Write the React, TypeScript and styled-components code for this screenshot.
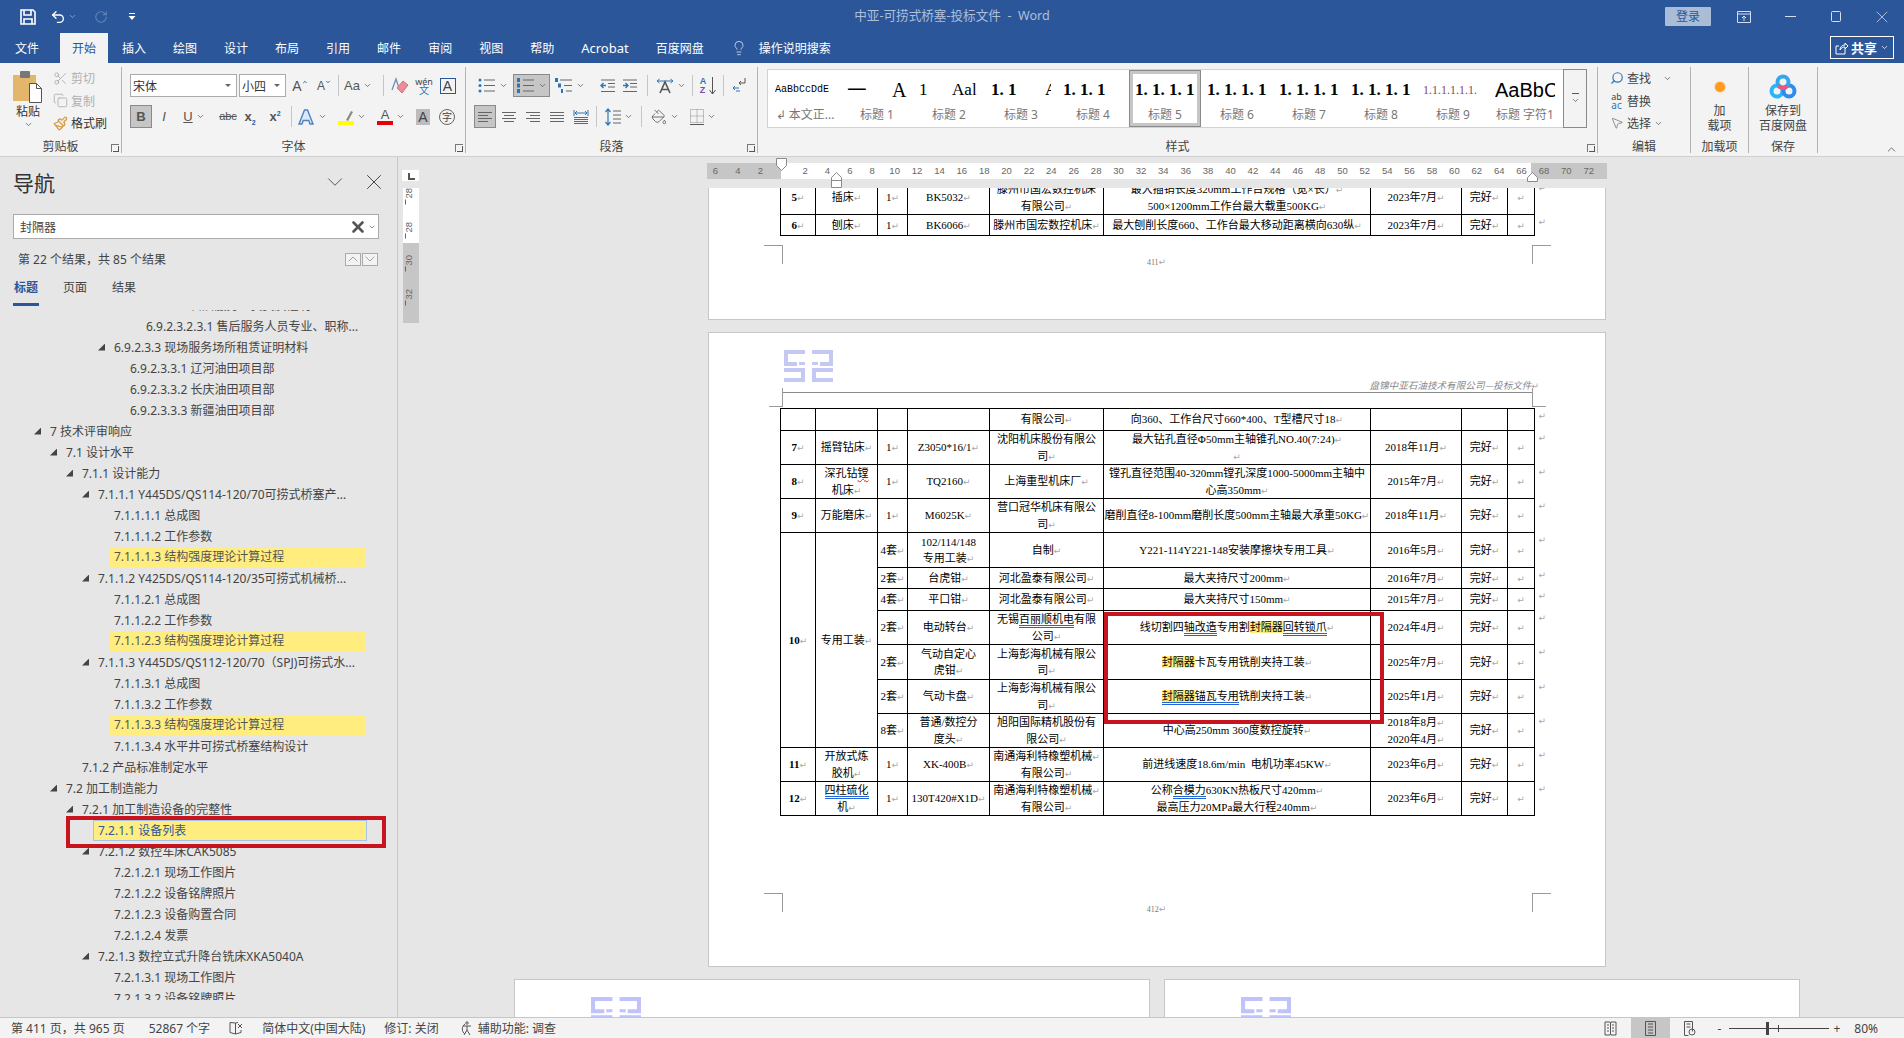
import React from 'react';
import styled, { createGlobalStyle } from 'styled-components';
import {
  ChevronDown,
  ChevronUp,
  Copy,
  Lightbulb,
  MousePointer2,
  PaintBucket,
  Paintbrush,
  RotateCw,
  Scissors,
  Search,
  Undo2,
  X,
} from 'lucide-react';

const UI_FONT = `"Noto Sans", "Noto Sans CJK SC", sans-serif`;
const DOC_FONT = `"Liberation Serif", "Noto Sans CJK SC", serif`;

const GlobalStyle = createGlobalStyle`
  html, body { margin: 0; padding: 0; height: 100%; overflow: hidden; }
  body { font-family: ${UI_FONT}; font-size: 12px; color: #444; background: #e6e6e6; }
  * { box-sizing: border-box; }
`;

const Shell = styled.div`
  width: 1904px;
  height: 1038px;
  display: flex;
  flex-direction: column;
  overflow: hidden;
`;

/* ---------- title bar ---------- */

const TitleBar = styled.div`
  height: 33px;
  flex: none;
  background: #2b579a;
  display: grid;
  grid-template-columns: 1fr auto 1fr;
  align-items: center;
  color: #fff;
`;

const Quick = styled.div`
  display: flex;
  align-items: center;
  padding-left: 18px;
`;

const QuickSlot = styled.div<{ $w: number }>`
  width: ${(p) => p.$w}px;
  display: flex;
  align-items: center;
  justify-content: center;
  gap: 2px;
`;

const DocTitle = styled.div`
  color: #aebfd9;
  font-size: 12.6px;
  line-height: 30px;
  margin-bottom: 1px;
  white-space: pre;
`;

const WindowControls = styled.div`
  display: flex;
  align-items: center;
  justify-content: flex-end;
  margin-right: -1px;
`;

const LoginButton = styled.div`
  width: 46px;
  height: 19px;
  background: #aabcd6;
  border-radius: 1px;
  color: #2b579a;
  text-align: center;
  line-height: 19px;
  margin-right: 10px;
`;

const WindowButton = styled.div`
  width: 46px;
  height: 30px;
  display: flex;
  align-items: center;
  justify-content: center;
`;

/* ---------- tab row ---------- */

const TabRow = styled.div`
  height: 30px;
  flex: none;
  background: #2b579a;
  display: flex;
  align-items: stretch;
  padding-left: 3px;
  gap: 3px;
  color: #fff;
`;

const RibbonTab = styled.div<{ $active?: boolean; $mr?: number; $size?: number }>`
  padding: 0 12px;
  display: flex;
  align-items: center;
  background: ${(p) => (p.$active ? '#f3f3f3' : 'transparent')};
  color: ${(p) => (p.$active ? '#2b579a' : '#fff')};
  margin-right: ${(p) => p.$mr ?? 0}px;
  font-size: ${(p) => p.$size ?? 12}px;
`;

const TellMe = styled.div`
  display: flex;
  align-items: center;
  gap: 12px;
  margin-left: 12px;
`;

const ShareButton = styled.div`
  margin: 3px 10px 4px auto;
  width: 64px;
  border: 1px solid #fff;
  display: flex;
  align-items: center;
  justify-content: center;
  gap: 3px;
  font-weight: 700;
  font-size: 13px;
`;

/* ---------- ribbon ---------- */

const Ribbon = styled.div`
  height: 94px;
  flex: none;
  background: #f3f3f3;
  border-bottom: 1px solid #d0d0d0;
  display: flex;
  align-items: flex-start;
  position: relative;
`;

const Group = styled.div<{ $w: number; $plain?: boolean }>`
  width: ${(p) => p.$w}px;
  height: 86px;
  margin-top: 4px;
  flex: none;
  display: flex;
  flex-direction: column;
  position: relative;
  border-right: ${(p) => (p.$plain ? 'none' : '1px solid #b4b4b4')};
`;

const GroupBody = styled.div`
  flex: 1;
  min-height: 0;
  display: flex;
`;

const GroupLabel = styled.div`
  height: 13px;
  line-height: 13px;
  flex: none;
  text-align: center;
  color: #444;
`;

const Launcher = styled.div`
  position: absolute;
  right: 2px;
  bottom: 1px;
  width: 8px;
  height: 8px;
  border-left: 1px solid #777;
  border-top: 1px solid #777;
  &::after {
    content: '';
    position: absolute;
    right: 0;
    bottom: 0;
    width: 5px;
    height: 5px;
    border-right: 1px solid #555;
    border-bottom: 1px solid #555;
  }
`;

const PasteColumn = styled.div`
  width: 50px;
  margin-left: 3px;
  display: flex;
  flex-direction: column;
  align-items: center;
  padding-top: 4px;
  color: #333;
`;

const PasteLabel = styled.div`
  margin-top: 1px;
  line-height: 16px;
`;

const SmallColumn = styled.div`
  display: flex;
  flex-direction: column;
  margin-left: 0;
`;

const SmallRow = styled.div<{ $off?: boolean }>`
  height: 22.5px;
  display: flex;
  align-items: center;
  gap: 3px;
  color: ${(p) => (p.$off ? '#b0b0b0' : '#333')};
`;

const IconSlot = styled.div<{ $w?: number }>`
  width: ${(p) => p.$w ?? 15}px;
  display: flex;
  align-items: center;
  justify-content: center;
`;

const ToolStack = styled.div<{ $pl: number }>`
  display: flex;
  flex-direction: column;
  gap: 8px;
  padding: 7px 0 0 ${(p) => p.$pl}px;
`;

const ToolRow = styled.div`
  height: 23px;
  display: flex;
  align-items: center;
`;

const SelectBox = styled.div<{ $w: number; $ml?: number }>`
  width: ${(p) => p.$w}px;
  height: 23px;
  margin-left: ${(p) => p.$ml ?? 0}px;
  background: #fff;
  border: 1px solid #ababab;
  display: flex;
  align-items: center;
  padding: 0 5px 0 2px;
  justify-content: space-between;
  color: #333;
`;

const Caret = styled.span`
  width: 0;
  height: 0;
  border-left: 3px solid transparent;
  border-right: 3px solid transparent;
  border-top: 3px solid #666;
`;

const Tool = styled.div<{ $w: number; $ml?: number; $on?: boolean }>`
  width: ${(p) => p.$w}px;
  height: 23px;
  flex: none;
  margin-left: ${(p) => p.$ml ?? 0}px;
  display: flex;
  align-items: center;
  justify-content: center;
  gap: 3px;
  color: #555;
  background: ${(p) => (p.$on ? '#c6c6c6' : 'transparent')};
  border: ${(p) => (p.$on ? '1px solid #8a8a8a' : 'none')};
`;

const ToolSep = styled.div<{ $ml?: number; $mr?: number }>`
  width: 1px;
  height: 21px;
  flex: none;
  background: #c6c6c6;
  margin-left: ${(p) => p.$ml ?? 0}px;
  margin-right: ${(p) => p.$mr ?? 0}px;
`;

const Glyph = styled.span<{ $size?: number; $bold?: boolean; $italic?: boolean; $color?: string; $line?: string }>`
  font-family: "Liberation Sans", sans-serif;
  font-size: ${(p) => p.$size ?? 13}px;
  line-height: 1;
  font-weight: ${(p) => (p.$bold ? 700 : 400)};
  font-style: ${(p) => (p.$italic ? 'italic' : 'normal')};
  color: ${(p) => p.$color ?? '#555'};
  text-decoration: ${(p) => p.$line ?? 'none'};
  white-space: pre;
`;

const GrowCaret = styled(ChevronUp)`
  margin: -8px 0 0 -3px;
`;

const ShrinkCaret = styled(ChevronDown)`
  margin: -8px 0 0 -3px;
`;

const SubGlyph = styled.sub`
  font-size: 7px;
  color: #2b579a;
  line-height: 0;
`;

const SupGlyph = styled.sup`
  font-size: 7px;
  color: #2b579a;
  line-height: 0;
`;

const ColorLetter = styled.span<{ $bar: string }>`
  font-family: "Liberation Sans", sans-serif;
  font-size: 13px;
  line-height: 12px;
  height: 16px;
  width: 16px;
  text-align: center;
  color: #555;
  border-bottom: 4px solid ${(p) => p.$bar};
`;

const BoxedLetter = styled.span`
  width: 16px;
  height: 16px;
  border: 1px solid #2b579a;
  font-family: "Liberation Sans", sans-serif;
  font-size: 14px;
  line-height: 14px;
  text-align: center;
  color: #444;
`;

const ShadedLetter = styled.span`
  width: 14px;
  height: 16px;
  background: #bcbcbc;
  font-family: "Liberation Sans", sans-serif;
  font-size: 14px;
  line-height: 16px;
  text-align: center;
  color: #444;
`;

const CircledChar = styled.span`
  width: 16px;
  height: 16px;
  border: 1px solid #666;
  border-radius: 50%;
  font-size: 10px;
  line-height: 14px;
  text-align: center;
  color: #444;
`;

const WenStack = styled.span`
  display: flex;
  flex-direction: column;
  align-items: center;
  line-height: 9px;
  font-size: 9px;
  color: #444;
`;

const WenChar = styled.span`
  color: #2e75b6;
  font-size: 10px;
`;

const GalleryWrap = styled.div`
  display: flex;
  margin: 2px 0 0 9px;
  height: 59px;
`;

const Gallery = styled.div`
  width: 796px;
  background: #fff;
  border: 1px solid #d2d2d2;
  border-right: none;
  display: flex;
  padding-left: 1px;
`;

const StyleItem = styled.div<{ $on?: boolean }>`
  width: 72px;
  flex: none;
  display: flex;
  flex-direction: column;
  align-items: center;
  overflow: hidden;
  ${(p) => (p.$on ? 'box-shadow: inset 0 0 0 1px #8a8a8a, inset 0 0 0 4px #c6c6c6;' : '')}
`;

const StylePreview = styled.div<{ $font?: string; $size?: number; $bold?: boolean; $color?: string }>`
  width: 60px;
  height: 34px;
  line-height: 40px;
  overflow: hidden;
  white-space: pre;
  text-align: left;
  font-family: ${(p) => p.$font ?? '"Liberation Serif", serif'};
  font-size: ${(p) => p.$size ?? 17}px;
  font-weight: ${(p) => (p.$bold ? 700 : 400)};
  color: ${(p) => p.$color ?? '#000'};
`;

const StyleName = styled.div`
  color: #777;
  white-space: pre;
  line-height: 22px;
`;

const GalleryMore = styled.div`
  width: 24px;
  border: 1px solid #8a8a8a;
  background: #f3f3f3;
  display: flex;
  flex-direction: column;
  align-items: center;
  justify-content: center;
  gap: 2px;
`;

const MoreBar = styled.span`
  width: 7px;
  height: 1px;
  background: #555;
`;

const EditColumn = styled.div`
  display: flex;
  flex-direction: column;
  padding: 0 0 0 11px;
`;

const EditRow = styled.div`
  height: 22.5px;
  display: flex;
  align-items: center;
  gap: 3px;
  color: #444;
`;

const FindIcon = styled(Search)`
  transform: scaleX(-1);
`;

const ChevSlot = styled.span<{ $ml: number }>`
  display: flex;
  margin-left: ${(p) => p.$ml}px;
`;

const BigTool = styled.div`
  flex: 1;
  display: flex;
  flex-direction: column;
  align-items: center;
  padding-top: 4px;
  color: #444;
  line-height: 15px;
  text-align: center;
`;

const BigIcon = styled.div`
  height: 31px;
  display: flex;
  align-items: center;
  margin-bottom: 1px;
`;

const OrangeDot = styled.span`
  width: 10px;
  height: 10px;
  border-radius: 50%;
  background: #ff9a1f;
  box-shadow: 0 0 2px #ffb45c;
`;

const RibbonCollapse = styled.div`
  position: absolute;
  right: 6px;
  bottom: 0;
  display: flex;
`;

/* ---------- workspace ---------- */

const Workspace = styled.div`
  flex: 1;
  min-height: 0;
  display: flex;
`;

const NavPane = styled.div`
  width: 398px;
  flex: none;
  background: #e6e6e6;
  border-right: 1px solid #c6c6c6;
  display: flex;
  flex-direction: column;
`;

const NavHeader = styled.div`
  height: 57px;
  flex: none;
  display: flex;
  align-items: center;
  padding: 0 10px 7px 13px;
`;

const NavTitle = styled.div`
  font-size: 21px;
  color: #333;
  margin-right: auto;
`;

const NavIcon = styled.div<{ $mr?: number }>`
  display: flex;
  margin-right: ${(p) => p.$mr ?? 0}px;
`;

const SearchBox = styled.div`
  height: 25px;
  width: 366px;
  flex: none;
  margin-left: 13px;
  background: #fff;
  border: 1px solid #ababab;
  display: flex;
  align-items: center;
  padding: 0 2px 0 6px;
  color: #444;
`;

const SearchText = styled.span`
  margin-right: auto;
`;

const SearchMenu = styled(ChevronDown)`
  margin-left: 1px;
`;

const ResultRow = styled.div`
  height: 30px;
  margin-top: 5px;
  flex: none;
  display: flex;
  align-items: center;
  padding: 0 19px 0 18px;
`;

const ResultText = styled.span`
  margin-right: auto;
  color: #444;
`;

const PageStep = styled.span`
  width: 16px;
  height: 13px;
  margin-left: 1px;
  border: 1px solid #ababab;
  background: #f3f3f3;
  display: flex;
  align-items: center;
  justify-content: center;
  overflow: hidden;
  svg {
    flex: none;
  }
`;

const NavTabs = styled.div`
  height: 32px;
  flex: none;
  display: flex;
  gap: 23px;
  padding-left: 13px;
`;

const NavTab = styled.div<{ $active?: boolean }>`
  width: 26px;
  text-align: center;
  line-height: 28px;
  color: ${(p) => (p.$active ? '#2b579a' : '#444')};
  font-weight: ${(p) => (p.$active ? 700 : 400)};
  border-bottom: 3px solid ${(p) => (p.$active ? '#2b579a' : 'transparent')};
`;

const Tree = styled.div`
  height: 690px;
  margin-top: 4px;
  flex: none;
  overflow: hidden;
  position: relative;
`;

const TreeInner = styled.div`
  margin-top: -15.5px;
`;

const TreeRow = styled.div<{ $level: number }>`
  height: 21px;
  display: flex;
  align-items: center;
  padding-left: ${(p) => 50 + p.$level * 16}px;
  white-space: pre;
  color: #444;
`;

const TreeArrow = styled.span`
  width: 7px;
  height: 7px;
  margin-left: -16px;
  margin-right: 9px;
  background: #444;
  clip-path: polygon(100% 0, 100% 100%, 0 100%);
`;

const TreeLabel = styled.span<{ $mode?: 'hit' | 'current' }>`
  ${(p) =>
    p.$mode === 'hit'
      ? 'background: #ffed80; width: 257px; height: 20px; line-height: 20px; margin-left: -5px; padding-left: 5px; color: #555;'
      : ''}
  ${(p) =>
    p.$mode === 'current'
      ? 'background: #ffed80; width: 274px; height: 21px; line-height: 19px; margin-left: -5px; padding-left: 4px; color: #2b579a; border: 1px solid #a6c4e8;'
      : ''}
`;

const Callout = styled.div<{ $left: number; $top: number; $w: number; $h: number }>`
  position: absolute;
  left: ${(p) => p.$left}px;
  top: ${(p) => p.$top}px;
  width: ${(p) => p.$w}px;
  height: ${(p) => p.$h}px;
  border: 4px solid #c8141e;
  pointer-events: none;
`;

const EditorPane = styled.div`
  flex: 1;
  min-width: 0;
  display: flex;
  flex-direction: column;
`;

const RulerRow = styled.div`
  height: 31px;
  flex: none;
  display: flex;
  padding-top: 6px;
`;

const RulerCorner = styled.div`
  width: 17px;
  height: 11px;
  margin: 7px 0 0 4px;
  background: #fff;
  position: relative;
  &::after {
    content: '';
    position: absolute;
    left: 6px;
    top: 3px;
    width: 5px;
    height: 5px;
    border-left: 2px solid #555;
    border-bottom: 2px solid #555;
  }
`;

const HRuler = styled.div`
  margin-left: 288px;
  width: 900px;
  height: 16px;
  position: relative;
  display: flex;
  background: linear-gradient(to right, #c6c6c6 74px, #fff 74px, #fff 824px, #c6c6c6 824px);
`;

const RulerScale = styled.div`
  display: flex;
  margin-left: -2.7px;
`;

const RulerNum = styled.span`
  width: 22.4px;
  flex: none;
  text-align: center;
  font-size: 9.5px;
  line-height: 16px;
  color: #666;
  font-family: "Liberation Sans", sans-serif;
`;

const RulerMarker = styled.svg<{ $left: number; $top: number }>`
  position: absolute;
  left: ${(p) => p.$left}px;
  top: ${(p) => p.$top}px;
`;

const EditorBody = styled.div`
  flex: 1;
  min-height: 0;
  display: flex;
`;

const VRuler = styled.div`
  width: 16px;
  margin-left: 5px;
  flex: none;
  display: flex;
  flex-direction: column;
`;

const VBand = styled.div<{ $h: number; $gray?: boolean }>`
  height: ${(p) => p.$h}px;
  flex: none;
  overflow: hidden;
  background: ${(p) => (p.$gray ? '#c6c6c6' : '#fff')};
`;

const VNum = styled.div<{ $shift?: number }>`
  height: 33.5px;
  margin-top: ${(p) => p.$shift ?? 0}px;
  display: flex;
  align-items: center;
  justify-content: center;
  writing-mode: vertical-rl;
  transform: rotate(180deg);
  font-size: 9.5px;
  color: #666;
  font-family: "Liberation Sans", sans-serif;
  position: relative;
  &::after {
    content: '';
    position: absolute;
    left: 7.5px;
    top: 5px;
    width: 1px;
    height: 5px;
    background: #666;
  }
`;

const Canvas = styled.div`
  flex: 1;
  min-width: 0;
  overflow: hidden;
  display: flex;
  flex-direction: column;
  align-items: center;
  padding-right: 9px;
  gap: 12px;
`;

const Page = styled.div<{ $h: number }>`
  width: 898px;
  height: ${(p) => p.$h}px;
  flex: none;
  background: #fff;
  border: 1px solid #c6c6c6;
  position: relative;
  display: flex;
  flex-direction: column;
  overflow: hidden;
`;

const TopPage = styled(Page)`
  border-top: none;
`;

const PageHeader = styled.div`
  height: 42px;
  margin: 17px 66px 0 75px;
  display: flex;
  justify-content: space-between;
  flex: none;
`;

const HeaderText = styled.div`
  font-family: "Noto Sans CJK SC", sans-serif;
  font-size: 9.6px;
  line-height: 13px;
  font-style: italic;
  color: #888;
  white-space: pre;
  align-self: flex-end;
`;

const HeaderRule = styled.div`
  height: 16px;
  margin: 0 72px 0 73px;
  border-top: 1px solid #8a8a8a;
  flex: none;
`;

const Table = styled.table<{ $shift?: number }>`
  margin: ${(p) => p.$shift ?? 0}px 0 0 71px;
  width: 754px;
  flex: none;
  table-layout: fixed;
  border-collapse: collapse;
  font-family: ${DOC_FONT};
  font-size: 11px;
  color: #000;
`;

const Tr = styled.tr<{ $h: number }>`
  height: ${(p) => p.$h}px;
`;

const Td = styled.td<{ $bold?: boolean }>`
  border: 1px solid #000;
  padding: 0;
  text-align: center;
  vertical-align: middle;
  white-space: pre;
  line-height: 16.5px;
  font-weight: ${(p) => (p.$bold ? 700 : 400)};
  overflow: visible;
  position: relative;
`;

const Mark = styled.span`
  font-family: "DejaVu Sans", sans-serif;
  font-size: 9px;
  line-height: 1;
  font-weight: 400;
  color: #a8a8a8;
`;

const EndMark = styled(Mark)`
  position: absolute;
  right: -12px;
  top: 0;
  line-height: 14px;
`;

const Hit = styled.span`
  background: #ffed80;
`;

const Grammar = styled.span`
  border-bottom: 3px double #2464d6;
`;

const Spell = styled.span`
  text-decoration: underline wavy #e0201c 1px;
`;

const PageNumber = styled.div<{ $mt: number }>`
  margin-top: ${(p) => p.$mt}px;
  text-align: center;
  font-family: ${DOC_FONT};
  font-size: 8px;
  line-height: 10px;
  color: #777;
  flex: none;
  padding-right: 1px;
`;

const CropMark = styled.div<{ $side: 'left' | 'right'; $top: number }>`
  position: absolute;
  top: ${(p) => p.$top}px;
  ${(p) => (p.$side === 'left' ? 'left: 55px; border-right: 1px solid #9a9a9a;' : 'left: 823px; border-left: 1px solid #9a9a9a;')}
  width: 19px;
  height: 19px;
  border-top: 1px solid #9a9a9a;
`;

const HeaderCorner = styled.div<{ $side: 'left' | 'right' }>`
  position: absolute;
  top: 55px;
  height: 19px;
  width: 14px;
  border-bottom: 1px solid #9a9a9a;
  ${(p) => (p.$side === 'left' ? 'left: 60px; border-right: 1px solid #9a9a9a;' : 'left: 823px; border-left: 1px solid #9a9a9a;')}
`;

const PageRow = styled.div`
  display: flex;
  gap: 14px;
  flex: none;
`;

const SmallPage = styled.div`
  width: 636px;
  height: 120px;
  background: #fff;
  border: 1px solid #c6c6c6;
  padding: 17px 0 0 76px;
`;

/* ---------- status bar ---------- */

const StatusBar = styled.div`
  height: 21px;
  flex: none;
  background: #f3f3f3;
  border-top: 1px solid #c6c6c6;
  display: flex;
  align-items: center;
  color: #444;
  position: relative;
  z-index: 1;
`;

const StatusItem = styled.div<{ $left: number }>`
  margin-left: ${(p) => p.$left}px;
  display: flex;
  align-items: center;
  gap: 6px;
  white-space: pre;
`;

const StatusRight = styled.div`
  margin-left: auto;
  padding-right: 26px;
  display: flex;
  align-items: center;
`;

const ViewButton = styled.div<{ $on?: boolean; $ml?: number }>`
  width: 39px;
  height: 20px;
  margin-left: ${(p) => p.$ml ?? 0}px;
  background: ${(p) => (p.$on ? '#c6c6c6' : 'transparent')};
  display: flex;
  align-items: center;
  justify-content: center;
`;

const ZoomTrack = styled.div`
  width: 100px;
  height: 1px;
  flex: none;
  margin: 0 4px 0 8px;
  background: #444;
  position: relative;
`;

const ZoomThumb = styled.span`
  position: absolute;
  left: 37px;
  top: -6px;
  width: 3px;
  height: 13px;
  background: #444;
`;

const ZoomCenter = styled.span`
  position: absolute;
  left: 49px;
  top: -3px;
  width: 1px;
  height: 7px;
  background: #444;
`;

/* ---------- drawn icons ---------- */

const SaveIcon = () => (
  <svg width="16" height="16" viewBox="0 0 16 16" fill="none" stroke="#fff" strokeWidth="1.6">
    <path d="M1 1h12l2 2v12H1z" />
    <path d="M4 1v5h7V1M4 15v-5h8v5" />
  </svg>
);

const QuickMenuIcon = () => (
  <svg width="8" height="8" viewBox="0 0 8 8" fill="#fff">
    <rect x="1" y="0" width="6" height="1" />
    <path d="M0.5 3h7L4 7z" />
  </svg>
);

const RibbonDisplayIcon = () => (
  <svg width="14" height="12" viewBox="0 0 14 12" fill="none" stroke="#d5deec">
    <path d="M.5.5h13v11H.5zM.5 3h13M7 10V5M5 7l2-2 2 2" />
  </svg>
);

const ShareIcon = () => (
  <svg width="13" height="14" viewBox="0 0 13 14" fill="none" stroke="#fff">
    <path d="M1 5v8h9V8M1 5h3M5 9c0-3 2-5 5-5V2l3 3-3 3V6c-2 0-4 1-5 3z" />
  </svg>
);

const TinyChevron = ({ color = '#555' }: { color?: string }) => (
  <ChevronDown size={9} strokeWidth={2} color={color} />
);

const PasteIcon = () => (
  <svg width="30" height="32" viewBox="0 0 30 32" fill="none">
    <rect x="0" y="4" width="23" height="26" fill="#e3b66b" />
    <rect x="7" y="0" width="10" height="7" rx="1" fill="#777" />
    <path d="M16.5 12.5h7l5 5v14h-12z" fill="#fff" stroke="#555" />
    <path d="M23.5 12.5v5h5" stroke="#555" />
  </svg>
);

type AlignMode = 'left' | 'center' | 'right' | 'full';

const AlignIcon = ({ mode }: { mode: AlignMode }) => {
  const long = 14;
  const short = mode === 'full' ? 14 : 10;
  const x = mode === 'left' || mode === 'full' ? 1 : mode === 'center' ? 3 : 5;
  return (
    <svg width="16" height="12" viewBox="0 0 16 12" stroke="#666">
      <path d={`M1 1.5h${long}`} />
      <path d={`M${x} 4.5h${short}`} />
      <path d={`M1 7.5h${long}`} />
      <path d={`M${x} 10.5h${short}`} />
    </svg>
  );
};

const DistributeIcon = () => (
  <svg width="16" height="16" viewBox="0 0 16 16" fill="none">
    <path d="M1 1v6M15 1v6M2 4h12M4 2L2 4l2 2M12 2l2 2-2 2" stroke="#2e75b6" />
    <path d="M1 8.5h14M1 10.5h14M1 12.5h14M1 14.5h14" stroke="#666" />
  </svg>
);

const BulletsIcon = () => (
  <svg width="18" height="15" viewBox="0 0 18 15">
    <g fill="#2e75b6">
      <circle cx="2" cy="2" r="1.5" />
      <circle cx="2" cy="7.5" r="1.5" />
      <circle cx="2" cy="13" r="1.5" />
    </g>
    <path d="M6 2h11M6 7.5h11M6 13h11" stroke="#666" />
  </svg>
);

const NumberingIcon = () => (
  <svg width="18" height="15" viewBox="0 0 18 15">
    <g fill="#2e75b6">
      <rect x="0" y="0" width="3" height="4" />
      <rect x="0" y="5.5" width="3" height="4" />
      <rect x="0" y="11" width="3" height="4" />
    </g>
    <path d="M6 2h11M6 7.5h11M6 13h11" stroke="#666" />
  </svg>
);

const MultiLevelIcon = () => (
  <svg width="18" height="15" viewBox="0 0 18 15">
    <g fill="#2e75b6">
      <rect x="0" y="0" width="3" height="4" />
      <rect x="3" y="5.5" width="3" height="4" />
      <rect x="6" y="11" width="2" height="4" />
    </g>
    <path d="M5 2h12M9 7.5h8M11 13h6" stroke="#666" />
  </svg>
);

const IndentIcon = ({ out }: { out?: boolean }) => (
  <svg width="16" height="14" viewBox="0 0 16 14" fill="none">
    <path d="M1 1h14M8 4.5h7M8 8h7M1 12.5h14" stroke="#666" />
    <path d={out ? 'M6 6.5H1M3.5 4L1 6.5 3.5 9' : 'M1 6.5h5M3.5 4L6 6.5 3.5 9'} stroke="#2e75b6" strokeWidth="1.4" />
  </svg>
);

const AsianLayoutIcon = () => (
  <svg width="18" height="16" viewBox="0 0 18 16" fill="none">
    <path d="M1 3h16M1 3l2.5-2M1 3l2.5 2M17 3l-2.5-2M17 3l-2.5 2" stroke="#2e75b6" />
    <path d="M4 15L9 4l5 11M5.5 11.5h7" stroke="#555" strokeWidth="1.6" />
  </svg>
);

const SortLetters = styled.span`
  display: flex;
  flex-direction: column;
  font-family: "Liberation Sans", sans-serif;
  font-size: 9px;
  line-height: 9px;
  font-weight: 700;
  color: #2e75b6;
`;

const SortZ = styled.span`
  color: #7b4fa6;
`;

const DownArrowIcon = () => (
  <svg width="7" height="18" viewBox="0 0 7 18" fill="none" stroke="#555">
    <path d="M3.5 0v17M.5 13l3 4 3-4" />
  </svg>
);

const ParagraphMarkIcon = () => (
  <svg width="14" height="16" viewBox="0 0 14 16" fill="none" stroke="#555">
    <path d="M13 0v5H7M9 3L7 5l2 2" />
    <path d="M7 10H1M3 8l-2 2 2 2M8 13H4" stroke="#2e75b6" />
  </svg>
);

const LineSpacingIcon = () => (
  <svg width="16" height="18" viewBox="0 0 16 18" fill="none">
    <path d="M3 1v16M.5 4L3 1l2.5 3M.5 14L3 17l2.5-3" stroke="#2e75b6" strokeWidth="1.2" />
    <path d="M8 3h8M8 7h8M8 11h8M8 15h8" stroke="#666" />
  </svg>
);

const BorderIcon = () => (
  <svg width="14" height="16" viewBox="0 0 14 16" fill="none" stroke="#8a8a8a" strokeDasharray="1 1">
    <path d="M.5.5h13v13H.5zM7 .5v13M.5 7h13" />
    <path d="M0 15.5h14" stroke="#555" strokeDasharray="none" />
  </svg>
);

const EraserIcon = () => (
  <svg width="18" height="18" viewBox="0 0 18 18" fill="none">
    <path d="M1 13L5 2l3 9" stroke="#6f8fb5" strokeWidth="1.3" />
    <path d="M6 11l6-7 5 4-6 8z" fill="#ec8c98" stroke="#d66e7c" />
  </svg>
);

const TextEffectIcon = () => (
  <svg width="18" height="18" viewBox="0 0 18 18" fill="#dbe8f6" stroke="#4f83bd" strokeWidth="1.4">
    <path d="M2 16L7.5 2h3L16 16h-3l-1.2-3.5H6.2L5 16z" />
  </svg>
);

const HighlighterIcon = () => (
  <svg width="16" height="16" viewBox="0 0 16 16" fill="none">
    <path d="M8 11l5-9 2 1-5 9z" fill="#8a8a8a" />
    <rect x="0" y="12" width="16" height="4" fill="#ffff00" />
  </svg>
);

const BookCheckIcon = () => (
  <svg width="14" height="13" viewBox="0 0 14 13" fill="none" stroke="#555">
    <path d="M6.5 1L1 .5v10l5.5 1.5zM6.5 1L9 .5M6.5 12L12 10.5V8" />
    <path d="M9 2l4 4M13 2L9 6" />
  </svg>
);

const AccessibilityIcon = () => (
  <svg width="14" height="16" viewBox="0 0 14 16" fill="none" stroke="#555">
    <path d="M7 4a6 6 0 0 0 0 10" />
    <circle cx="9" cy="3" r="1.2" />
    <path d="M5 6h8M9 6v4M9 10l-3 5M9 10l3 5" />
  </svg>
);

const ViewIcon = ({ kind }: { kind: 'read' | 'print' | 'web' }) => (
  <svg width="13" height="15" viewBox="0 0 13 15" fill="none" stroke="#555">
    {kind === 'read' && <path d="M1 1h5l.5 1 .5-1h5v13H7l-.5-1-.5 1H1zM6.5 2v11M3 4h2M3 7h2M3 10h2M8 4h2M8 7h2M8 10h2" />}
    {kind === 'print' && <path d="M1.5 .5h10v14h-10zM4 3h5M4 6h5M4 9h5M4 12h5" />}
    {kind === 'web' && (
      <>
        <path d="M1.5 .5h8v10M1.5 .5v14h4M3.5 3h4M3.5 6h4" />
        <circle cx="9" cy="11" r="3" />
      </>
    )}
  </svg>
);

const BaiduCloudIcon = () => (
  <svg width="28" height="26" viewBox="0 0 28 26" fill="none">
    <circle cx="8" cy="17" r="5.5" stroke="#29b6f6" strokeWidth="4" />
    <circle cx="20" cy="17" r="5.5" stroke="#2d8cf0" strokeWidth="4" />
    <circle cx="14" cy="8" r="5.5" stroke="#35a7f0" strokeWidth="4" />
    <path d="M9.5 12a6 6 0 0 0 9 0" stroke="#f0567a" strokeWidth="4" />
  </svg>
);

const FretLogo = ({ width, color }: { width: number; color: string }) => (
  <svg width={width} height={(width * 32) / 49} viewBox="0 0 49 32" fill={color}>
    <path d="M0 0h21v4H4v8h9v4H0z" />
    <path d="M15 12h6v3h-6z" />
    <path d="M0 18h21v14H0v-4h17v-6H0z" />
    <path d="M49 0H28v4h17v8h-9v4h13z" />
    <path d="M28 12h6v3h-6z" />
    <path d="M49 18H28v14h21v-4H32v-6h17z" />
  </svg>
);

/* ---------- data ---------- */

type TreeItem = {
  level: number;
  text: string;
  open?: boolean;
  mode?: 'hit' | 'current';
};

const TREE: TreeItem[] = [
  { level: 5, text: '6.9.2.3.2.3 售后服务人员资质证明', open: true },
  { level: 6, text: '6.9.2.3.2.3.1 售后服务人员专业、职称...' },
  { level: 4, text: '6.9.2.3.3 现场服务场所租赁证明材料', open: true },
  { level: 5, text: '6.9.2.3.3.1 辽河油田项目部' },
  { level: 5, text: '6.9.2.3.3.2 长庆油田项目部' },
  { level: 5, text: '6.9.2.3.3.3 新疆油田项目部' },
  { level: 0, text: '7 技术评审响应', open: true },
  { level: 1, text: '7.1 设计水平', open: true },
  { level: 2, text: '7.1.1 设计能力', open: true },
  { level: 3, text: '7.1.1.1 Y445DS/QS114-120/70可捞式桥塞产...', open: true },
  { level: 4, text: '7.1.1.1.1 总成图' },
  { level: 4, text: '7.1.1.1.2 工作参数' },
  { level: 4, text: '7.1.1.1.3 结构强度理论计算过程', mode: 'hit' },
  { level: 3, text: '7.1.1.2 Y425DS/QS114-120/35可捞式机械桥...', open: true },
  { level: 4, text: '7.1.1.2.1 总成图' },
  { level: 4, text: '7.1.1.2.2 工作参数' },
  { level: 4, text: '7.1.1.2.3 结构强度理论计算过程', mode: 'hit' },
  { level: 3, text: '7.1.1.3 Y445DS/QS112-120/70（SPJ)可捞式水...', open: true },
  { level: 4, text: '7.1.1.3.1 总成图' },
  { level: 4, text: '7.1.1.3.2 工作参数' },
  { level: 4, text: '7.1.1.3.3 结构强度理论计算过程', mode: 'hit' },
  { level: 4, text: '7.1.1.3.4 水平井可捞式桥塞结构设计' },
  { level: 2, text: '7.1.2 产品标准制定水平' },
  { level: 1, text: '7.2 加工制造能力', open: true },
  { level: 2, text: '7.2.1 加工制造设备的完整性', open: true },
  { level: 3, text: '7.2.1.1 设备列表', mode: 'current' },
  { level: 3, text: '7.2.1.2 数控车床CAK5085', open: true },
  { level: 4, text: '7.2.1.2.1 现场工作图片' },
  { level: 4, text: '7.2.1.2.2 设备铭牌照片' },
  { level: 4, text: '7.2.1.2.3 设备购置合同' },
  { level: 4, text: '7.2.1.2.4 发票' },
  { level: 3, text: '7.2.1.3 数控立式升降台铣床XKA5040A', open: true },
  { level: 4, text: '7.2.1.3.1 现场工作图片' },
  { level: 4, text: '7.2.1.3.2 设备铭牌照片' },
];

const TABS = ['插入', '绘图', '设计', '布局', '引用', '邮件', '审阅', '视图', '帮助', 'Acrobat', '百度网盘'];

const P = () => <Mark>↵</Mark>;

type Cell = React.ReactNode;
type TableRow = { h: number; cells: Cell[]; span?: number };

const COLS = [35, 62, 30, 82, 114, 267, 91, 46, 27];

const t = (s: string): Cell => (
  <>
    {s}
    <P />
  </>
);

const mfg = (s: string, extra: string) => (
  <>
    {s}
    <P />
    {'\n'}
    {extra}
    <P />
  </>
);

const PAGE_ONE: TableRow[] = [
  {
    h: 34,
    cells: [
      t('5'),
      t('插床'),
      t('1'),
      t('BK5032'),
      t('滕州市国宏数控机床\n有限公司'),
      mfg('最大插销长度320mm工作台规格（宽×长）', '500×1200mm工作台最大载重500KG'),
      t('2023年7月'),
      t('完好'),
      <P />,
    ],
  },
  {
    h: 21,
    cells: [
      t('6'),
      t('刨床'),
      t('1'),
      t('BK6066'),
      t('滕州市国宏数控机床'),
      t('最大刨削长度660、工作台最大移动距离横向630纵'),
      t('2023年7月'),
      t('完好'),
      <P />,
    ],
  },
];

const PAGE_TWO: TableRow[] = [
  { h: 22, cells: ['', '', '', '', t('有限公司'), t('向360、工作台尺寸660*400、T型槽尺寸18'), '', '', ''] },
  {
    h: 34,
    cells: [
      t('7'),
      t('摇臂钻床'),
      t('1'),
      t('Z3050*16/1'),
      t('沈阳机床股份有限公\n司'),
      mfg('最大钻孔直径Φ50mm主轴锥孔NO.40(7:24)', ''),
      t('2018年11月'),
      t('完好'),
      <P />,
    ],
  },
  {
    h: 34,
    cells: [
      t('8'),
      <>
        深孔钻<Spell>镗</Spell>
        {'\n'}机床
        <P />
      </>,
      t('1'),
      t('TQ2160'),
      t('上海重型机床厂'),
      t('镗孔直径范围40-320mm镗孔深度1000-5000mm主轴中\n心高350mm'),
      t('2015年7月'),
      t('完好'),
      <P />,
    ],
  },
  {
    h: 34,
    cells: [
      t('9'),
      t('万能磨床'),
      t('1'),
      t('M6025K'),
      t('营口冠华机床有限公\n司'),
      t('磨削直径8-100mm磨削长度500mm主轴最大承重50KG'),
      t('2018年11月'),
      t('完好'),
      <P />,
    ],
  },
  {
    h: 35,
    span: 7,
    cells: [
      t('10'),
      t('专用工装'),
      t('4套'),
      t('102/114/148\n专用工装'),
      t('自制'),
      t('Y221-114Y221-148安装摩擦块专用工具'),
      t('2016年5月'),
      t('完好'),
      <P />,
    ],
  },
  { h: 21, cells: [t('2套'), t('台虎钳'), t('河北盈泰有限公司'), t('最大夹持尺寸200mm'), t('2016年7月'), t('完好'), <P />] },
  { h: 22, cells: [t('4套'), t('平口钳'), t('河北盈泰有限公司'), t('最大夹持尺寸150mm'), t('2015年7月'), t('完好'), <P />] },
  {
    h: 34,
    cells: [
      t('2套'),
      t('电动转台'),
      <>
        无锡<Grammar>百丽顺机电</Grammar>有限
        {'\n'}公司
        <P />
      </>,
      <>
        线切割四<Grammar>轴改造</Grammar>专用割<Hit>封隔器</Hit>
        <Grammar>回转锁爪</Grammar>
        <P />
      </>,
      t('2024年4月'),
      t('完好'),
      <P />,
    ],
  },
  {
    h: 35,
    cells: [
      t('2套'),
      t('气动自定心\n虎钳'),
      t('上海彭海机械有限公\n司'),
      <>
        <Hit>封隔器</Hit>卡瓦专用铣削夹持工装
        <P />
      </>,
      t('2025年7月'),
      t('完好'),
      <P />,
    ],
  },
  {
    h: 34,
    cells: [
      t('2套'),
      t('气动卡盘'),
      t('上海彭海机械有限公\n司'),
      <>
        <Grammar>
          <Hit>封隔器</Hit>锚瓦专用
        </Grammar>
        铣削夹持工装
        <P />
      </>,
      t('2025年1月'),
      t('完好'),
      <P />,
    ],
  },
  {
    h: 34,
    cells: [
      t('8套'),
      t('普通/数控分\n度头'),
      t('旭阳国际精机股份有\n限公司'),
      t('中心高250mm 360度数控旋转'),
      mfg('2018年8月', '2020年4月'),
      t('完好'),
      <P />,
    ],
  },
  {
    h: 34,
    cells: [
      t('11'),
      t('开放式炼\n胶机'),
      t('1'),
      t('XK-400B'),
      mfg('南通海利特橡塑机械', '有限公司'),
      t('前进线速度18.6m/min  电机功率45KW'),
      t('2023年6月'),
      t('完好'),
      <P />,
    ],
  },
  {
    h: 34,
    cells: [
      t('12'),
      <>
        <Grammar>四柱硫化</Grammar>
        {'\n'}机
        <P />
      </>,
      t('1'),
      t('130T420#X1D'),
      mfg('南通海利特橡塑机械', '有限公司'),
      <>
        公称<Grammar>合模力</Grammar>630KN热板尺寸420mm
        <P />
        {'\n'}最高压力20MPa最大行程240mm
        <P />
      </>,
      t('2023年6月'),
      t('完好'),
      <P />,
    ],
  },
];

const DocTable = ({ rows, shift }: { rows: TableRow[]; shift?: number }) => (
  <Table $shift={shift}>
    <colgroup>
      {COLS.map((w, i) => (
        <col key={i} width={w} />
      ))}
    </colgroup>
    <tbody>
      {rows.map((row, r) => {
        const full = row.cells.length === COLS.length;
        return (
          <Tr key={r} $h={row.h}>
            {row.cells.map((cell, c) => {
              const leading = full && c < 2;
              const last = c === row.cells.length - 1;
              return (
                <Td key={c} $bold={full && c === 0} rowSpan={leading ? row.span : undefined}>
                  {cell}
                  {last && <EndMark>↵</EndMark>}
                </Td>
              );
            })}
          </Tr>
        );
      })}
    </tbody>
  </Table>
);

const RULER = [6, 4, 2, 0, ...Array.from({ length: 36 }, (_, i) => (i + 1) * 2)];

const App = (): JSX.Element => (
  <Shell>
    <GlobalStyle />
    <TitleBar>
      <Quick>
        <QuickSlot $w={20}>
          <SaveIcon />
        </QuickSlot>
        <QuickSlot $w={50}>
          <Undo2 size={16} color="#fff" strokeWidth={2} />
          <TinyChevron color="#9fb4d4" />
        </QuickSlot>
        <QuickSlot $w={26}>
          <RotateCw size={14} color="#5f83b8" strokeWidth={2} />
        </QuickSlot>
        <QuickSlot $w={36}>
          <QuickMenuIcon />
        </QuickSlot>
      </Quick>
      <DocTitle>中亚-可捞式桥塞-投标文件  -  Word</DocTitle>
      <WindowControls>
        <LoginButton>登录</LoginButton>
        <WindowButton>
          <RibbonDisplayIcon />
        </WindowButton>
        <WindowButton>
          <svg width="11" height="1">
            <rect width="11" height="1" fill="#d5deec" />
          </svg>
        </WindowButton>
        <WindowButton>
          <svg width="10" height="11" fill="none" stroke="#d5deec">
            <rect x=".5" y=".5" width="9" height="10" rx="1" />
          </svg>
        </WindowButton>
        <WindowButton>
          <X size={20} color="#d5deec" strokeWidth={0.9} />
        </WindowButton>
      </WindowControls>
    </TitleBar>

    <TabRow>
      <RibbonTab $mr={6}>文件</RibbonTab>
      <RibbonTab $active $mr={-1}>
        开始
      </RibbonTab>
      {TABS.map((tab) => (
        <RibbonTab key={tab} $size={tab === 'Acrobat' ? 13 : 12}>
          {tab}
        </RibbonTab>
      ))}
      <TellMe>
        <Lightbulb size={16} color="#fff" strokeWidth={1} />
        操作说明搜索
      </TellMe>
      <ShareButton>
        <ShareIcon />
        共享
        <TinyChevron color="#fff" />
      </ShareButton>
    </TabRow>

    <Ribbon>
      <Group $w={122}>
        <GroupBody>
          <PasteColumn>
            <PasteIcon />
            <PasteLabel>粘贴</PasteLabel>
            <TinyChevron />
          </PasteColumn>
          <SmallColumn>
            <SmallRow $off>
              <IconSlot>
                <Scissors size={15} color="#a8a8a8" strokeWidth={1.3} />
              </IconSlot>
              剪切
            </SmallRow>
            <SmallRow $off>
              <IconSlot>
                <Copy size={15} color="#a8a8a8" strokeWidth={1.3} />
              </IconSlot>
              复制
            </SmallRow>
            <SmallRow>
              <IconSlot>
                <Paintbrush size={15} color="#d79a3c" strokeWidth={2} />
              </IconSlot>
              格式刷
            </SmallRow>
          </SmallColumn>
        </GroupBody>
        <GroupLabel>剪贴板</GroupLabel>
        <Launcher />
      </Group>

      <Group $w={344}>
        <GroupBody>
          <ToolStack $pl={8}>
            <ToolRow>
              <SelectBox $w={107}>
                宋体
                <Caret />
              </SelectBox>
              <SelectBox $w={47} $ml={2}>
                小四
                <Caret />
              </SelectBox>
              <Tool $w={24} $ml={2}>
                <Glyph $size={14}>A</Glyph>
                <GrowCaret size={6} color="#2e75b6" strokeWidth={4} />
              </Tool>
              <Tool $w={24}>
                <Glyph $size={12}>A</Glyph>
                <ShrinkCaret size={6} color="#2e75b6" strokeWidth={4} />
              </Tool>
              <ToolSep $ml={2} $mr={1} />
              <Tool $w={36}>
                <Glyph $size={13}>Aa</Glyph>
                <TinyChevron />
              </Tool>
              <ToolSep $ml={7} $mr={4} />
              <Tool $w={24}>
                <EraserIcon />
              </Tool>
              <Tool $w={24}>
                <WenStack>
                  wén
                  <WenChar>文</WenChar>
                </WenStack>
              </Tool>
              <Tool $w={23}>
                <BoxedLetter>A</BoxedLetter>
              </Tool>
            </ToolRow>
            <ToolRow>
              <Tool $w={22} $on>
                <Glyph $bold>B</Glyph>
              </Tool>
              <Tool $w={24}>
                <Glyph $italic>I</Glyph>
              </Tool>
              <Tool $w={36}>
                <Glyph $line="underline">U</Glyph>
                <TinyChevron />
              </Tool>
              <Tool $w={30} $ml={1}>
                <Glyph $size={11} $line="line-through">
                  abc
                </Glyph>
              </Tool>
              <Tool $w={14}>
                <Glyph $bold>
                  x<SubGlyph>2</SubGlyph>
                </Glyph>
              </Tool>
              <Tool $w={30} $ml={3}>
                <Glyph $bold>
                  x<SupGlyph>2</SupGlyph>
                </Glyph>
              </Tool>
              <ToolSep $ml={1} $mr={4} />
              <Tool $w={32}>
                <TextEffectIcon />
                <TinyChevron />
              </Tool>
              <Tool $w={34} $ml={7}>
                <HighlighterIcon />
                <TinyChevron />
              </Tool>
              <Tool $w={34} $ml={5}>
                <ColorLetter $bar="#e8000b">A</ColorLetter>
                <TinyChevron />
              </Tool>
              <Tool $w={22} $ml={4}>
                <ShadedLetter>A</ShadedLetter>
              </Tool>
              <Tool $w={22} $ml={2}>
                <CircledChar>字</CircledChar>
              </Tool>
            </ToolRow>
          </ToolStack>
        </GroupBody>
        <GroupLabel>字体</GroupLabel>
        <Launcher />
      </Group>

      <Group $w={292}>
        <GroupBody>
          <ToolStack $pl={8}>
            <ToolRow>
              <Tool $w={34} $ml={2}>
                <BulletsIcon />
                <TinyChevron />
              </Tool>
              <Tool $w={37} $ml={3} $on>
                <NumberingIcon />
                <TinyChevron />
              </Tool>
              <Tool $w={30} $ml={5}>
                <MultiLevelIcon />
                <TinyChevron />
              </Tool>
              <Tool $w={22} $ml={12}>
                <IndentIcon out />
              </Tool>
              <Tool $w={22}>
                <IndentIcon />
              </Tool>
              <ToolSep $ml={6} $mr={7} />
              <Tool $w={32}>
                <AsianLayoutIcon />
                <TinyChevron />
              </Tool>
              <ToolSep $ml={5} $mr={4} />
              <Tool $w={22}>
                <SortLetters>
                  A<SortZ>Z</SortZ>
                </SortLetters>
                <DownArrowIcon />
              </Tool>
              <ToolSep $ml={4} $mr={4} />
              <Tool $w={22}>
                <ParagraphMarkIcon />
              </Tool>
            </ToolRow>
            <ToolRow>
              <Tool $w={22} $on>
                <AlignIcon mode="left" />
              </Tool>
              <Tool $w={22} $ml={2}>
                <AlignIcon mode="center" />
              </Tool>
              <Tool $w={22} $ml={2}>
                <AlignIcon mode="right" />
              </Tool>
              <Tool $w={22} $ml={2}>
                <AlignIcon mode="full" />
              </Tool>
              <Tool $w={22} $ml={2}>
                <DistributeIcon />
              </Tool>
              <ToolSep $ml={4} $mr={6} />
              <Tool $w={32}>
                <LineSpacingIcon />
                <TinyChevron />
              </Tool>
              <ToolSep $ml={6} $mr={6} />
              <Tool $w={34}>
                <PaintBucket size={16} color="#666" strokeWidth={1.4} />
                <TinyChevron />
              </Tool>
              <Tool $w={34} $ml={4}>
                <BorderIcon />
                <TinyChevron />
              </Tool>
            </ToolRow>
          </ToolStack>
        </GroupBody>
        <GroupLabel>段落</GroupLabel>
        <Launcher />
      </Group>

      <Group $w={840}>
        <GroupBody>
          <GalleryWrap>
            <Gallery>
              <StyleItem>
                <StylePreview $font={'"Liberation Mono", monospace'} $size={10}>
                  AaBbCcDdE
                </StylePreview>
                <StyleName>↲ 本文正...</StyleName>
              </StyleItem>
              <StyleItem>
                <StylePreview $size={20}>{'一     A'}</StylePreview>
                <StyleName>标题 1</StyleName>
              </StyleItem>
              <StyleItem>
                <StylePreview>{'1      Aal'}</StylePreview>
                <StyleName>标题 2</StyleName>
              </StyleItem>
              <StyleItem>
                <StylePreview $bold>{'1. 1       A'}</StylePreview>
                <StyleName>标题 3</StyleName>
              </StyleItem>
              <StyleItem>
                <StylePreview $bold>{'1. 1. 1'}</StylePreview>
                <StyleName>标题 4</StyleName>
              </StyleItem>
              <StyleItem $on>
                <StylePreview $bold>{'1. 1. 1. 1'}</StylePreview>
                <StyleName>标题 5</StyleName>
              </StyleItem>
              <StyleItem>
                <StylePreview $bold>{'1. 1. 1. 1'}</StylePreview>
                <StyleName>标题 6</StyleName>
              </StyleItem>
              <StyleItem>
                <StylePreview $bold>{'1. 1. 1. 1'}</StylePreview>
                <StyleName>标题 7</StyleName>
              </StyleItem>
              <StyleItem>
                <StylePreview $bold>{'1. 1. 1. 1'}</StylePreview>
                <StyleName>标题 8</StyleName>
              </StyleItem>
              <StyleItem>
                <StylePreview $size={12} $color="#8a4a63">
                  1.1.1.1.1.1.
                </StylePreview>
                <StyleName>标题 9</StyleName>
              </StyleItem>
              <StyleItem>
                <StylePreview $font={'"Liberation Sans", sans-serif'} $size={20}>
                  AaBbC
                </StylePreview>
                <StyleName>标题 字符1</StyleName>
              </StyleItem>
            </Gallery>
            <GalleryMore>
              <MoreBar />
              <TinyChevron />
            </GalleryMore>
          </GalleryWrap>
        </GroupBody>
        <GroupLabel>样式</GroupLabel>
        <Launcher />
      </Group>

      <Group $w={93}>
        <GroupBody>
          <EditColumn>
            <EditRow>
              <IconSlot>
                <FindIcon size={14} color="#2e75b6" strokeWidth={2} />
              </IconSlot>
              查找
              <ChevSlot $ml={9}>
                <TinyChevron />
              </ChevSlot>
            </EditRow>
            <EditRow>
              <IconSlot>
                <WenStack>
                  <span>ab</span>
                  <WenChar>ac</WenChar>
                </WenStack>
              </IconSlot>
              替换
            </EditRow>
            <EditRow>
              <IconSlot>
                <MousePointer2 size={14} color="#666" strokeWidth={1.2} />
              </IconSlot>
              选择
              <TinyChevron />
            </EditRow>
          </EditColumn>
        </GroupBody>
        <GroupLabel>编辑</GroupLabel>
      </Group>

      <Group $w={58}>
        <GroupBody>
          <BigTool>
            <BigIcon>
              <OrangeDot />
            </BigIcon>
            加
            <br />
            载项
          </BigTool>
        </GroupBody>
        <GroupLabel>加载项</GroupLabel>
      </Group>

      <Group $w={69}>
        <GroupBody>
          <BigTool>
            <BigIcon>
              <BaiduCloudIcon />
            </BigIcon>
            保存到
            <br />
            百度网盘
          </BigTool>
        </GroupBody>
        <GroupLabel>保存</GroupLabel>
      </Group>

      <RibbonCollapse>
        <ChevronUp size={13} color="#555" strokeWidth={1.5} />
      </RibbonCollapse>
    </Ribbon>

    <Workspace>
      <NavPane>
        <NavHeader>
          <NavTitle>导航</NavTitle>
          <NavIcon $mr={13}>
            <ChevronDown size={26} color="#555" strokeWidth={0.9} />
          </NavIcon>
          <NavIcon>
            <X size={26} color="#444" strokeWidth={0.9} />
          </NavIcon>
        </NavHeader>
        <SearchBox>
          <SearchText>封隔器</SearchText>
          <X size={18} color="#555" strokeWidth={3.5} />
          <SearchMenu size={8} color="#555" strokeWidth={2} />
        </SearchBox>
        <ResultRow>
          <ResultText>第 22 个结果，共 85 个结果</ResultText>
          <PageStep>
            <ChevronUp size={16} color="#777" strokeWidth={1} />
          </PageStep>
          <PageStep>
            <ChevronDown size={16} color="#777" strokeWidth={1} />
          </PageStep>
        </ResultRow>
        <NavTabs>
          <NavTab $active>标题</NavTab>
          <NavTab>页面</NavTab>
          <NavTab>结果</NavTab>
        </NavTabs>
        <Tree>
          <TreeInner>
            {TREE.map((item) => (
              <TreeRow key={item.text} $level={item.level}>
                {item.open && <TreeArrow />}
                <TreeLabel $mode={item.mode}>{item.text}</TreeLabel>
              </TreeRow>
            ))}
          </TreeInner>
          <Callout $left={66} $top={506} $w={320} $h={32} />
        </Tree>
      </NavPane>

      <EditorPane>
        <RulerRow>
          <RulerCorner />
          <HRuler>
            <RulerScale>
              {RULER.map((n, i) => (
                <RulerNum key={i}>{n === 0 ? '' : n}</RulerNum>
              ))}
            </RulerScale>
            <RulerMarker $left={69} $top={-5} width="11" height="13" viewBox="0 0 11 13" fill="#fff" stroke="#8a8a8a">
              <path d="M.5.5h10v7l-5 5-5-5z" />
            </RulerMarker>
            <RulerMarker $left={124} $top={9} width="11" height="16" viewBox="0 0 11 16" fill="#fff" stroke="#8a8a8a">
              <path d="M5.5.5l5 5v10H.5v-10zM.5 8.5h10" />
            </RulerMarker>
            <RulerMarker $left={820} $top={9} width="11" height="10" viewBox="0 0 11 10" fill="#fff" stroke="#8a8a8a">
              <path d="M5.5.5l5 5v4H.5v-4z" />
            </RulerMarker>
          </HRuler>
        </RulerRow>
        <EditorBody>
          <VRuler>
            <VBand $h={55}>
              <VNum $shift={-12}>28</VNum>
              <VNum>28</VNum>
            </VBand>
            <VBand $h={80} $gray>
              <VNum>30</VNum>
              <VNum>32</VNum>
            </VBand>
          </VRuler>
          <Canvas>
            <TopPage $h={132}>
              <DocTable rows={PAGE_ONE} shift={-8} />
              <PageNumber $mt={22}>
                411
                <Mark>↵</Mark>
              </PageNumber>
              <CropMark $side="left" $top={57} />
              <CropMark $side="right" $top={57} />
            </TopPage>
            <Page $h={635}>
              <PageHeader>
                <FretLogo width={49} color="#c6c8f4" />
                <HeaderText>
                  盘锦中亚石油技术有限公司—投标文件
                  <Mark>↵</Mark>
                </HeaderText>
              </PageHeader>
              <HeaderRule />
              <DocTable rows={PAGE_TWO} />
              <PageNumber $mt={89}>
                412
                <Mark>↵</Mark>
              </PageNumber>
              <HeaderCorner $side="left" />
              <HeaderCorner $side="right" />
              <CropMark $side="left" $top={560} />
              <CropMark $side="right" $top={560} />
              <Callout $left={395} $top={279} $w={280} $h={112} />
            </Page>
            <PageRow>
              <SmallPage>
                <FretLogo width={50} color="#c0c2fb" />
              </SmallPage>
              <SmallPage>
                <FretLogo width={50} color="#c0c2fb" />
              </SmallPage>
            </PageRow>
          </Canvas>
        </EditorBody>
      </EditorPane>
    </Workspace>

    <StatusBar>
      <StatusItem $left={11}>第 411 页，共 965 页</StatusItem>
      <StatusItem $left={24}>52867 个字</StatusItem>
      <StatusItem $left={19}>
        <BookCheckIcon />
      </StatusItem>
      <StatusItem $left={19}>简体中文(中国大陆)</StatusItem>
      <StatusItem $left={19}>修订: 关闭</StatusItem>
      <StatusItem $left={19}>
        <AccessibilityIcon />
        辅助功能: 调查
      </StatusItem>
      <StatusRight>
        <ViewIcon kind="read" />
        <ViewButton $on $ml={14}>
          <ViewIcon kind="print" />
        </ViewButton>
        <ViewButton>
          <ViewIcon kind="web" />
        </ViewButton>
        <StatusItem $left={9}>-</StatusItem>
        <ZoomTrack>
          <ZoomThumb />
          <ZoomCenter />
        </ZoomTrack>
        <StatusItem $left={0}>+</StatusItem>
        <StatusItem $left={14}>80%</StatusItem>
      </StatusRight>
    </StatusBar>
  </Shell>
);

export default App;
